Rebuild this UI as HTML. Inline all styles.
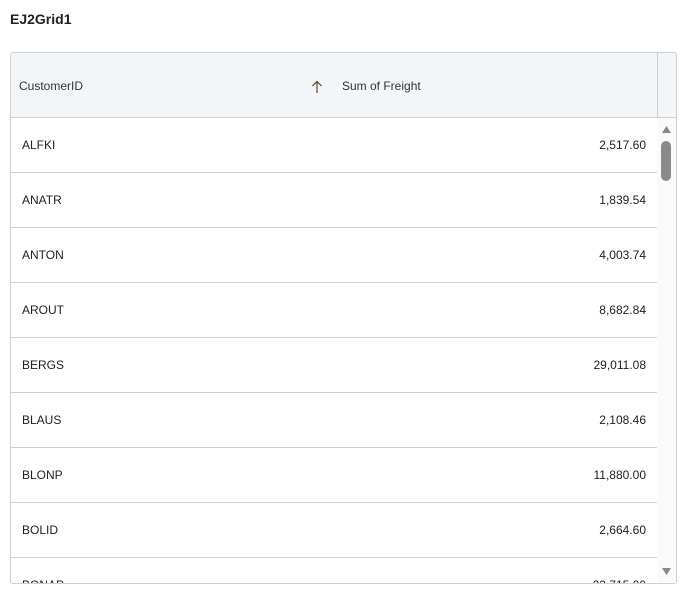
<!DOCTYPE html>
<html><head><style>
body{margin:0;background:#fff;font-family:"Liberation Sans",sans-serif;color:#212121;}
.t{position:absolute;left:10px;top:11px;font-size:14px;font-weight:bold;}
.g{position:absolute;left:10px;top:52px;width:665px;height:530px;border:1px solid #cfcfcf;border-radius:3px;overflow:hidden;}
.h{position:absolute;left:0;top:0;width:665px;height:64px;background:#f3f6f9;border-bottom:1px solid #cfcfcf;font-size:12px;color:#333;}
.h span{position:absolute;top:26px;}
.vl{position:absolute;left:646px;top:0;width:1px;height:64px;background:#cfcfcf;}
.r{position:absolute;left:0;width:646px;height:54px;border-bottom:1px solid #d0d0d0;font-size:12px;}
.r .a{position:absolute;left:11px;top:20px;}
.r .b{position:absolute;right:11px;top:20px;}
.sb{position:absolute;left:646px;top:65px;width:19px;height:465px;background:#fafafa;}
.th{position:absolute;left:4px;top:23px;width:10px;height:40px;background:#8a8a8a;border-radius:5px;}
</style></head><body>
<div class="t">EJ2Grid1</div>
<div class="g">
<div class="h"><span style="left:8px">CustomerID</span>
<svg width="12" height="14" style="position:absolute;left:300px;top:27px"><path d="M6 13V1.5M1.5 6L6 1.5L10.5 6" stroke="#5a4a2a" stroke-width="1.2" fill="none"/></svg>
<span style="left:331px">Sum of Freight</span><div class="vl"></div></div>
<div class="r" style="top:65px"><span class="a">ALFKI</span><span class="b">2,517.60</span></div>
<div class="r" style="top:120px"><span class="a">ANATR</span><span class="b">1,839.54</span></div>
<div class="r" style="top:175px"><span class="a">ANTON</span><span class="b">4,003.74</span></div>
<div class="r" style="top:230px"><span class="a">AROUT</span><span class="b">8,682.84</span></div>
<div class="r" style="top:285px"><span class="a">BERGS</span><span class="b">29,011.08</span></div>
<div class="r" style="top:340px"><span class="a">BLAUS</span><span class="b">2,108.46</span></div>
<div class="r" style="top:395px"><span class="a">BLONP</span><span class="b">11,880.00</span></div>
<div class="r" style="top:450px"><span class="a">BOLID</span><span class="b">2,664.60</span></div>
<div class="r" style="top:505px"><span class="a">BONAP</span><span class="b">23,715.00</span></div>
<div class="sb"><svg width="19" height="465" style="position:absolute;left:0;top:0"><polygon points="5,15 14,15 9.5,8" fill="#888"/><polygon points="5,450 14,450 9.5,457" fill="#888"/></svg><div class="th"></div></div>
</div>
</body></html>
